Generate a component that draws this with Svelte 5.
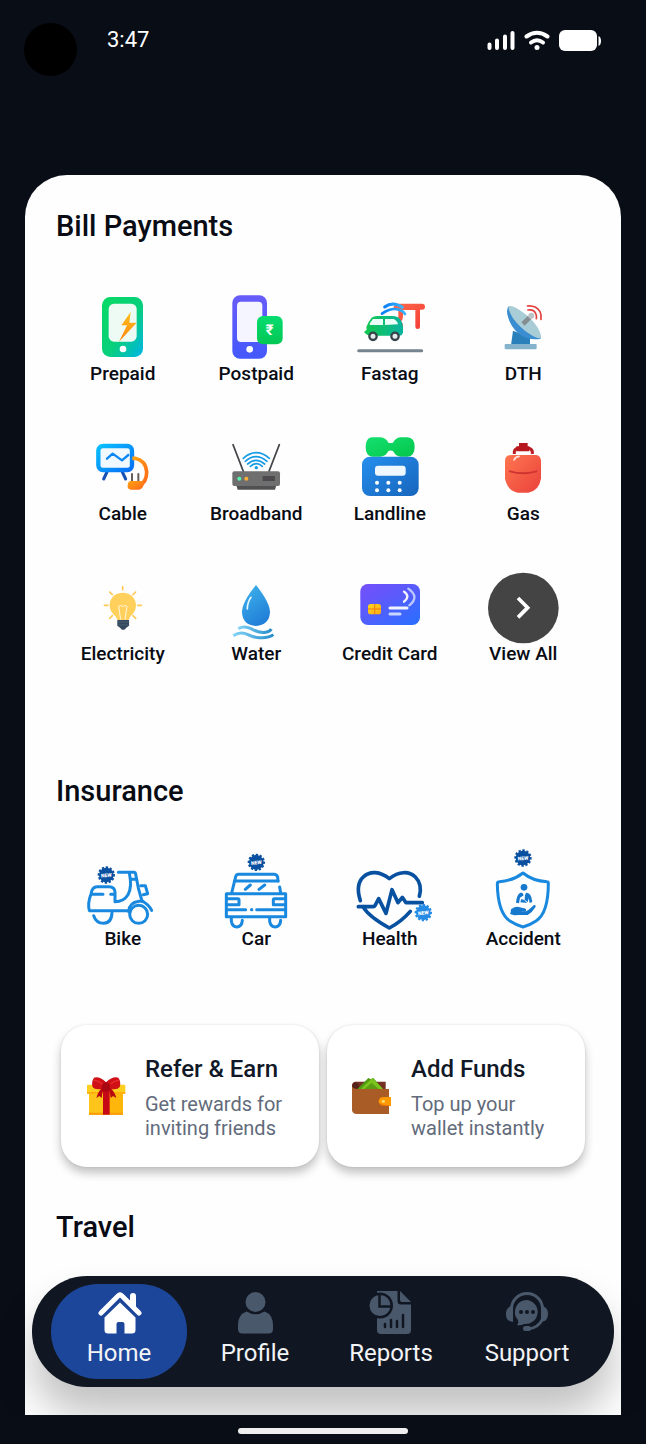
<script>
  const tabs = ['Home', 'Profile', 'Reports', 'Support'];
  let active = $state('Home');
</script>

{#snippet prepaid()}
  <svg viewBox="27 24 210 210" aria-hidden="true">
    <defs>
      <linearGradient id="pre" x1="0" y1="0" x2="1" y2="1"><stop offset=".1" stop-color="#08d868" /><stop offset=".55" stop-color="#08cf7c" /><stop offset="1" stop-color="#00b4e8" /></linearGradient>
      <linearGradient id="bolt" x1="0" y1="0" x2="0" y2="1"><stop offset="0" stop-color="#ffc01a" /><stop offset="1" stop-color="#ff8410" /></linearGradient>
    </defs>
    <rect x="69" y="36" width="123" height="180" rx="25" fill="url(#pre)" />
    <rect x="89" y="56" width="84" height="114" rx="16" fill="#eefbf5" />
    <path d="M155 81 127 121h17l-24 49 53-57h-22z" fill="url(#bolt)" />
    <circle cx="132" cy="192" r="10" fill="#fff" />
  </svg>
{/snippet}

{#snippet postpaid()}
  <svg viewBox="426 24 210 210" aria-hidden="true">
    <defs>
      <linearGradient id="post" x1="0" y1="0" x2="0" y2="1"><stop offset="0" stop-color="#685cfa" /><stop offset="1" stop-color="#4458fb" /></linearGradient>
      <linearGradient id="rup" x1="0" y1="0" x2="0" y2="1"><stop offset="0" stop-color="#06dc70" /><stop offset="1" stop-color="#03c754" /></linearGradient>
    </defs>
    <rect x="460" y="31" width="104" height="190" rx="23" fill="url(#post)" />
    <rect x="474" y="50" width="76" height="121" rx="12" fill="#f5f5ff" />
    <circle cx="512" cy="193" r="10" fill="#fff" />
    <rect x="534" y="93" width="77" height="85" rx="18" fill="url(#rup)" />
    <text x="572" y="150" text-anchor="middle" class="rupee">₹</text>
  </svg>
{/snippet}

{#snippet fastag()}
  <svg viewBox="30 24 210 210" aria-hidden="true">
    <defs>
      <linearGradient id="fcar" x1="0" y1="0" x2="1" y2="0"><stop offset="0" stop-color="#12c84c" /><stop offset="1" stop-color="#08b3a0" /></linearGradient>
      <linearGradient id="gate" x1="0" y1="0" x2="1" y2="1"><stop offset="0" stop-color="#ff6a4c" /><stop offset="1" stop-color="#f43a35" /></linearGradient>
      <linearGradient id="wave" x1="0" y1="0" x2="1" y2="0"><stop offset="0" stop-color="#087ff5" /><stop offset="1" stop-color="#38b5ff" /></linearGradient>
    </defs>
    <path d="M150 56h81q9 0 9 9t-9 9h-6v51q0 7-7 7t-7-7V75h-37v20q-1 10-6 14 8 8 6 17h-14V75l-15-7z" fill="url(#gate)" />
    <path d="M119 66q25-19 53 1" fill="none" stroke="url(#wave)" stroke-width="9" stroke-linecap="round" />
    <path d="M111 86q12-9 23-12 14-4 28 0 14 4 18 13" fill="none" stroke="url(#wave)" stroke-width="8" stroke-linecap="round" />
    <path d="M80 98q6-5 17-5h45q16 0 23 9 8 10 9 25v16q-2 8-10 9H72q-10-4-15-11l8-7-1-8q5-15 16-28z" fill="url(#fcar)" />
    <path d="M84 102h30v18H76q-4-1-1-6zM120 102h26q11 5 13 16l-39 2z" fill="#e9fff8" />
    <g fill="#e5e9ea" stroke="#35424a" stroke-width="7"><circle cx="84" cy="154" r="11" /><circle cx="150" cy="154" r="11" /></g>
    <path d="M41 197h189" stroke="#75848f" stroke-width="9" stroke-linecap="round" />
  </svg>
{/snippet}

{#snippet dth()}
  <svg viewBox="429 24 210 210" aria-hidden="true">
    <path d="m504 137 51 20v24h-57z" fill="#2a80bb" />
    <rect x="479" y="177" width="96" height="16" rx="3" fill="#85b3cb" />
    <path d="M491 64q-7 7-4 24 7 35 34 58 28 20 64 16 5-3 2-9z" fill="#398dd0" />
    <path d="M491 64q10-4 37 14 31 20 49 48 14 24 10 33-8 4-32-11-29-19-50-47-17-28-14-37z" fill="#a9cdd6" />
    <path d="m534 117 20-20" stroke="#858d91" stroke-width="14" />
    <circle cx="559" cy="92" r="9" fill="#bcc4c8" />
    <g fill="none" stroke="#e3413f" stroke-width="5" stroke-linecap="round"><path d="M549 75q17-3 23 10 4 8 2 16" /><path d="M547 63q27-2 38 17 5 10 3 23" /></g>
  </svg>
{/snippet}

{#snippet cable()}
  <svg viewBox="27 24 210 210" aria-hidden="true">
    <defs>
      <linearGradient id="tv" x1="0" y1="0" x2="1" y2="1"><stop offset="0" stop-color="#08bfff" /><stop offset="1" stop-color="#0870f5" /></linearGradient>
      <linearGradient id="plug" x1="0" y1="0" x2="1" y2="1"><stop offset="0" stop-color="#ffa313" /><stop offset="1" stop-color="#ff6818" /></linearGradient>
    </defs>
    <path d="m84 141-10 21M130 141l10 21" stroke="#154fb2" stroke-width="9" stroke-linecap="round" />
    <rect x="58" y="63" width="101" height="72" rx="14" fill="#f0f9ff" stroke="url(#tv)" stroke-width="13" />
    <path d="m84 101 17-15 28 20 19-16" fill="none" stroke="#0b86f3" stroke-width="7" stroke-linecap="round" stroke-linejoin="round" />
    <path d="M160 100h9q31 7 34 40 0 32-22 41" fill="none" stroke="url(#plug)" stroke-width="11" />
    <path d="M159 147v27M178 147v27" stroke="#655e5b" stroke-width="6" stroke-linecap="round" />
    <path d="M153 168h41q2 24-14 26h-25q-10-2-9-10 0-13 7-16z" fill="url(#plug)" />
  </svg>
{/snippet}

{#snippet broadband()}
  <svg viewBox="426 24 210 210" aria-hidden="true">
    <path d="m462 59 31 80M601 59l-31 80" stroke="#444548" stroke-width="5" stroke-linecap="round" />
    <g fill="none" stroke="#159ae6" stroke-width="5" stroke-linecap="round"><path d="M493 100q38-34 78 0" /><path d="M499 109q31-28 65 0" /><path d="M506 117q25-22 51 0" /><path d="M514 124q18-16 36 0" /></g>
    <circle cx="532" cy="128" r="5" fill="#159ae6" />
    <path d="M471 178h122l-5 16H476z" fill="#515052" />
    <rect x="460" y="139" width="143" height="44" rx="6" fill="#706f70" />
    <rect x="551" y="153" width="37" height="15" rx="2" fill="#4b494b" />
    <circle cx="481" cy="161" r="6" fill="#57f4ad" /><circle cx="502" cy="161" r="6" fill="#ffad35" />
  </svg>
{/snippet}

{#snippet landline()}
  <svg viewBox="30 24 210 210" aria-hidden="true">
    <defs>
      <linearGradient id="desk" x1="0" y1="0" x2="1" y2="1"><stop offset="0" stop-color="#258fee" /><stop offset="1" stop-color="#1765bc" /></linearGradient>
      <linearGradient id="handset" x1="0" y1="0" x2="1" y2="1"><stop offset="0" stop-color="#14e070" /><stop offset="1" stop-color="#04c64a" /></linearGradient>
    </defs>
    <path d="M81 37h25q18 2 24 16 7 2 14 0 7-14 22-16h21q22 1 22 29t-22 29h-21q-15-2-22-17-7-3-14 0-6 15-24 17H81q-19-2-19-29t19-29z" fill="url(#handset)" />
    <rect x="51" y="95" width="170" height="118" rx="24" fill="url(#desk)" />
    <rect x="90" y="122" width="92" height="30" rx="9" fill="#eff8ff" />
    <g fill="#fff"><circle cx="96" cy="173" r="6" /><circle cx="130" cy="173" r="6" /><circle cx="164" cy="173" r="6" /><circle cx="96" cy="196" r="6" /><circle cx="130" cy="196" r="6" /><circle cx="164" cy="196" r="6" /></g>
  </svg>
{/snippet}

{#snippet gas()}
  <svg viewBox="429 24 210 210" aria-hidden="true">
    <defs><linearGradient id="cyl" x1="0" y1="0" x2="1" y2="1"><stop offset="0" stop-color="#ff7650" /><stop offset="1" stop-color="#e9413a" /></linearGradient></defs>
    <path d="M508 87V80q2-10 13-10h27q12 0 14 10v7" fill="none" stroke="#bd1e24" stroke-width="9" />
    <path d="M522 54h26v10h5v15h-39V64h8z" fill="#b7181e" />
    <path d="M499 90h71q17 0 18 17v53q-5 37-38 43h-32q-32-7-38-43v-53q1-17 19-17z" fill="url(#cyl)" />
    <path d="M495 139q39 12 79 0" fill="none" stroke="#cf3432" stroke-width="6" stroke-linecap="round" />
    <path d="M507 105q4-10 15-11" fill="none" stroke="#ffe2dc" stroke-width="5" stroke-linecap="round" />
  </svg>
{/snippet}

{#snippet electricity()}
  <svg viewBox="27 24 210 210" aria-hidden="true">
    <path d="M131 65v10M92 81l8 8M170 81l-8 8M76 121h11M176 121h11M92 160l8-8M170 160l-8-8" stroke="#ffca55" stroke-width="5" stroke-linecap="round" />
    <path d="M131 83c-23 0-39 16-39 38 0 18 11 26 19 35l6 12h30l6-12c8-9 18-17 18-35 0-22-17-38-40-38z" fill="#ffd05b" />
    <path d="m125 164-6-40q7-6 12 1 6-7 13-1l-6 40" fill="none" stroke="#fff6dd" stroke-width="3" />
    <path d="M115 165h35v17l-8 6-6 6h-7l-6-6-8-6z" fill="#34495e" /><path d="M115 171h36M115 180h36" stroke="#52677b" stroke-width="2" />
  </svg>
{/snippet}

{#snippet water()}
  <svg viewBox="426 24 210 210" aria-hidden="true">
    <defs>
      <linearGradient id="drop" x1="0" y1="0" x2=".5" y2="1"><stop offset="0" stop-color="#3fb5ed" /><stop offset="1" stop-color="#2280d8" /></linearGradient>
      <linearGradient id="stream" x1="0" y1="0" x2="1" y2="0"><stop offset="0" stop-color="#82d3f6" /><stop offset="1" stop-color="#268dcb" /></linearGradient>
    </defs>
    <path d="M531 60q-42 51-42 82 2 39 42 41 40-3 42-41 0-29-42-82z" fill="url(#drop)" />
    <path d="M516 97q-11 15-11 35" fill="none" stroke="#e4f8ff" stroke-width="5" stroke-linecap="round" />
    <g fill="none" stroke="url(#stream)" stroke-width="9"><path d="M478 191q18-10 38 0 24 14 44 11 12-2 17-10" /><path d="M463 212q21-14 42-4 22 11 40 10 25 1 38-9" /></g>
  </svg>
{/snippet}

{#snippet creditCard()}
  <svg viewBox="30 24 210 210" aria-hidden="true">
    <defs>
      <linearGradient id="ccard" x1="0" y1="0" x2="1" y2="1"><stop offset="0" stop-color="#7950fb" /><stop offset="1" stop-color="#286fff" /></linearGradient>
      <linearGradient id="chip" x1="0" y1="0" x2="1" y2="1"><stop offset="0" stop-color="#ffd91d" /><stop offset="1" stop-color="#ffa915" /></linearGradient>
    </defs>
    <rect x="46" y="57" width="179" height="123" rx="23" fill="url(#ccard)" />
    <path d="M46 80q0-23 23-23h133q23 0 23 23v25H46z" fill="#6b4ff8" opacity=".25" />
    <rect x="69" y="117" width="39" height="31" rx="8" fill="url(#chip)" />
    <path d="M69 132h39M89 117v31" stroke="#f37b13" stroke-width="3" />
    <g fill="none" stroke-linecap="round"><path d="M135 129h51" stroke="#eff4ff" stroke-width="9" /><path d="M135 147h30" stroke="#c9d6ff" stroke-width="9" /><path d="M177 80q20 14 0 30" stroke="#f4f4ff" stroke-width="7" /><path d="M190 71q35 25 3 50" stroke="#bcc9ff" stroke-width="7" /></g>
  </svg>
{/snippet}

{#snippet viewAll()}
  <svg viewBox="429 24 210 210" aria-hidden="true">
    <circle cx="535" cy="129" r="106" fill="#444" />
    <path d="m519 99 29 29-29 29" fill="none" stroke="#fff" stroke-width="11" />
  </svg>
{/snippet}

{#snippet newBadge(x, y, color)}
  <g transform="translate({x} {y}) rotate(-6)">
    <circle r="22" fill={color} />
    <circle r="23" fill="none" stroke={color} stroke-width="6" stroke-dasharray="7 5.04" />
    <text y="6" text-anchor="middle" class="new">NEW</text>
  </g>
{/snippet}

{#snippet bike()}
  <svg viewBox="12 9 240 240" aria-hidden="true">
    <g class="outline">
      <path d="M118 82h47q4 0 5 6 7 44 19 80 20 10 29 28" />
      <path d="M151 84q9 43-4 65-13 21-39 21v-29q-1-16-18-16H54q-15 0-18 22-11 29-5 50h118" />
      <path d="M39 148h33M95 148h12M154 103h19M185 122h14l7 24-13 3" />
      <circle cx="179" cy="208" r="27" /><path d="M149 200q1-27 31-31h12M44 212q7 23 30 23 24-1 25-32" />
    </g>
    {@render newBadge(82, 90, '#0a50a0')}
  </svg>
{/snippet}

{#snippet car()}
  <svg viewBox="411 9 240 240" aria-hidden="true">
    <g class="outline">
      <path d="m458 144 12-49q2-7 9-7h106q8 0 11 8l1 13M466 108h132M602 126l3 18M442 146h178v69H442z" />
      <path d="M446 161h31q3 0 3 4v14h-34M617 161h-31q-3 0-3 4v14h34M447 194h53M533 194h82" />
      <path d="M457 218v11q3 17 17 17 15-2 16-20M572 218v11q3 17 17 17 15-2 16-20" />
      <path d="m499 133 15-13M540 133l17-13" />
    </g>
    <circle cx="518" cy="194" r="5" fill="#1988df" />
    {@render newBadge(532, 52, '#0a50a0')}
  </svg>
{/snippet}

{#snippet health()}
  <svg viewBox="15 9 240 240" aria-hidden="true">
    <g class="outline dark">
      <path d="M46 167c-9-28-8-56 10-72 19-18 49-16 77 6 28-22 59-24 78-5 16 16 18 36 12 58M54 185q17 30 79 64 37-20 63-50" />
      <path d="M40 185h44q6 0 8-7l9-17 22 44 18-71 18 39 13-16 11 16h49" />
    </g>
    {@render newBadge(235, 203, '#258be5')}
  </svg>
{/snippet}

{#snippet accident()}
  <svg viewBox="414 9 240 240" aria-hidden="true">
    <path class="outline" d="M534 84q29 24 72 26 4 0 4 5 0 90-37 113-16 11-39 18-21-6-38-17-38-25-39-113 0-6 6-6 42-3 71-26z" />
    <g fill="#1679ce">
      <circle cx="537" cy="127" r="10" />
      <path d="M526 143q-11 5-13 30l9 2 3-17 11-7-4-8z" />
      <path d="m543 143 7 2q7 3 9 12l3 14-8 3-3-14-3 12-9-8 1-13z" />
      <path d="m529 162 9 3 8 9-20-2z" />
      <path d="M498 193q11-10 23-7l16 4q8 1 6 7-6 5-21 1 17 6 29-4l16-14q6-1 5 5-10 17-24 25h-26l-14 1-13-4q3-6 3-14z" />
    </g>
    {@render newBadge(534, 39, '#0a50a0')}
  </svg>
{/snippet}

{#snippet tile(label, icon)}
  <a class="tile" href="#{label.toLowerCase().replace(' ', '-')}">
    {@render icon()}
    <span>{label}</span>
  </a>
{/snippet}

<div class="screen">
  <header>
    <div class="camera"></div>
    <time>3:47</time>
    <div class="status">
      <svg width="28" height="22" viewBox="0 0 28 22" aria-label="Signal"><path d="M2.5 14.5V18M10 10.5V18M18 6.5V18M25.5 3V18" stroke="#fff" stroke-width="4" stroke-linecap="round" /></svg>
      <svg width="26" height="22" viewBox="0 0 26 22" aria-label="Wi-Fi"><g fill="none" stroke="#fff" stroke-width="4" stroke-linecap="round"><path d="M2.5 6.5Q13-1 23.5 6.5" /><path d="M7 12.5Q13 8 19 12.5" /></g><circle cx="13" cy="17.5" r="2.5" fill="#fff" /></svg>
      <svg width="42" height="22" viewBox="0 0 42 22" aria-label="Battery"><rect width="38" height="21" rx="6" fill="#fff" /><path d="M39.5 6q2.500 1 2.500 5t-2.500 5z" fill="#fff" /></svg>
    </div>
  </header>

  <main>
    <section>
      <h2>Bill Payments</h2>
      <div class="grid bills">
        {@render tile('Prepaid', prepaid)}
        {@render tile('Postpaid', postpaid)}
        {@render tile('Fastag', fastag)}
        {@render tile('DTH', dth)}
        {@render tile('Cable', cable)}
        {@render tile('Broadband', broadband)}
        {@render tile('Landline', landline)}
        {@render tile('Gas', gas)}
        {@render tile('Electricity', electricity)}
        {@render tile('Water', water)}
        {@render tile('Credit Card', creditCard)}
        {@render tile('View All', viewAll)}
      </div>
    </section>

    <section class="insurance">
      <h2>Insurance</h2>
      <div class="grid">
        {@render tile('Bike', bike)}
        {@render tile('Car', car)}
        {@render tile('Health', health)}
        {@render tile('Accident', accident)}
      </div>
    </section>

    <section class="cards">
      <a class="card" href="#refer">
        <svg viewBox="138 198 120 120" aria-hidden="true">
          <path d="M147 247h102v67H147z" fill="#ffb60b" /><path d="M147 247h42v67h-42z" fill="#ffc51a" /><path d="M147 308h102v6H147z" fill="#f99d06" />
          <rect x="141" y="224" width="115" height="27" rx="3" fill="#ffcf20" /><path d="M141 246h115v5H141z" fill="#ffad08" />
          <path d="M189 237h20v77h-20z" fill="#c60915" />
          <path d="M190 236q-25 5-32-5-5-15 4-28 17-5 36 14 20-19 37-14 9 12 4 28-7 10-30 5l-10 5z" fill="#cf1017" />
          <path d="M187 233q-13 11-18 31l9-6 7 6q1-17 7-28M210 233q14 11 19 31l-10-6-7 6q-1-17-7-28" fill="#b7070f" />
          <path d="M161 210q15 2 26 12M237 210q-15 2-25 12" fill="none" stroke="#e52b2b" stroke-width="4" /><ellipse cx="198" cy="231" rx="12" ry="14" fill="#a90812" />
        </svg>
        <div><h3>Refer &amp; Earn</h3><p>Get rewards for inviting friends</p></div>
      </a>
      <a class="card" href="#funds">
        <svg viewBox="96 198 120 120" aria-hidden="true">
          <path d="M105 215h92v25H96v-16q1-8 9-9z" fill="#733023" /><path d="M96 235q0-15 9-18 12 0 12 20z" fill="#54211b" />
          <path d="m112 237 33-33 8 4 7-4 29 33z" fill="#519b13" /><path d="m123 237 34-33 32 33z" fill="#7bc61c" /><path d="m133 237 22-19 21 19z" fill="#5b9c12" />
          <path d="M96 229q3 8 12 8h99v75h-99q-11-1-12-12z" fill="#aa5c26" />
          <path d="M213 261v27h-22q-14-2-15-14 1-13 15-13z" fill="#ff9900" /><path d="M207 288h-16q-11-1-14-9 12 8 30 6z" fill="#e46f05" /><circle cx="190" cy="274" r="5" fill="#ffd66b" />
        </svg>
        <div><h3>Add Funds</h3><p>Top up your wallet instantly</p></div>
      </a>
    </section>

    <section><h2>Travel</h2></section>
  </main>

  <nav aria-label="Main">
    {#each tabs as tab}
      <button class:active={active === tab} onclick={() => (active = tab)}>
        <svg viewBox="0 0 48 44" aria-hidden="true">
          {#if tab === 'Home'}
            <path d="M36 14V5q0-2 2-2t2 2v11" stroke="currentColor" fill="currentColor" stroke-width="2" />
            <path d="m6 22 17-17q2-2 4 0l17 17" fill="none" stroke="currentColor" stroke-width="5" stroke-linecap="round" stroke-linejoin="round" />
            <path d="m25 11.500 15.500 15V39q0 3.500-3.500 3.500h-7.500V33q0-2-2-2h-4q-2 0-2 2v9.500H13q-3.500 0-3.500-3.500V26.500z" fill="currentColor" />
          {:else if tab === 'Profile'}
            <circle cx="24.500" cy="11" r="10" fill="currentColor" />
            <path d="M15.500 20.500q9 5.500 18 0 8.500 3 8.500 14V38q0 4.500-4.500 4.500h-26Q7 42.500 7 38v-3.500q0-11 8.500-14z" fill="currentColor" />
          {:else if tab === 'Reports'}
            <path d="M10 0h20.500v10q0 3.500 3.500 3.500h10V39q0 4-4 4H14q-4 0-4-4z" fill="currentColor" />
            <path d="M33 0v9q0 2 2 2h9z" fill="currentColor" />
            <circle cx="13" cy="14.500" r="13" fill="#111722" /><circle cx="13" cy="14.500" r="10.500" fill="currentColor" />
            <path d="M12.500 3v12.500H24" fill="none" stroke="#111722" stroke-width="2.500" />
            <path d="M18 33v3M24 29v7M30 30v6M36 24v12" stroke="#111722" stroke-width="2.500" stroke-linecap="round" />
          {:else}
            <path d="M8.500 18a15.500 15.500 0 0 1 31 0M39.500 28q-4 9-14.500 10" fill="none" stroke="currentColor" stroke-width="3" />
            <path d="M10 15v16q-7-.5-7-8t7-8zM38 15v16q7-.5 7-8t-7-8z" fill="currentColor" />
            <rect x="20" y="35" width="8" height="5" rx="2.500" fill="currentColor" />
            <path d="M24 9a12 12 0 1 1-3 24q-3 2-7 1 2-2 1-5A12 12 0 0 1 24 9z" fill="currentColor" />
            <g fill="#111722"><circle cx="18" cy="21" r="2" /><circle cx="24" cy="21" r="2" /><circle cx="30" cy="21" r="2" /></g>
          {/if}
        </svg>
        <span>{tab}</span>
      </button>
    {/each}
  </nav>
  <footer><i></i></footer>
</div>

<style>
  :global(body) { background: #090d16; }
  .screen {
    position: relative;
    display: flex;
    flex-direction: column;
    min-height: 100vh;
    box-sizing: border-box;
    background: #090d16;
    color: #090c14;
    font-family: Roboto, sans-serif;
  }
  h2, h3, p { margin: 0; }
  a { color: inherit; text-decoration: none; }
  header {
    display: flex;
    align-items: flex-start;
    height: 152px;
    padding: 23px 45px 0 24px;
    color: #fff;
  }
  .camera { width: 53px; height: 53px; border-radius: 50%; background: #000; }
  time { margin-left: 30px; font-size: 22px; line-height: 34px; }
  .status { display: flex; gap: 9px; margin: 7px 0 0 auto; }
  main {
    flex: 1;
    margin: 0 25px;
    padding: 31px 31px 168px;
    border-radius: 42px 42px 0 0;
    background: #fefefe;
  }
  h2 { font-size: 29px; font-weight: 500; line-height: 40px; }
  .grid { display: grid; grid-template-columns: repeat(4, 1fr); margin-top: 37px; }
  .bills { margin-top: 47px; row-gap: 48px; }
  .insurance { margin-top: 106px; }
  .tile { display: flex; flex-direction: column; align-items: center; font-size: 19px; font-weight: 500; line-height: 22px; white-space: nowrap; }
  .tile svg { width: 70px; height: 70px; overflow: visible; }
  .insurance .tile svg { width: 80px; height: 80px; }
  .outline { fill: none; stroke: #1988df; stroke-width: 9px; stroke-linecap: round; stroke-linejoin: round; }
  .dark { stroke: #0751a0; stroke-width: 11px; }
  .new { fill: #fff; font-size: 15px; font-weight: 900; }
  .rupee { fill: #fff; font-size: 44px; font-weight: 700; }
  .cards { display: grid; grid-template-columns: 1fr 1fr; gap: 8px; margin: 75px 5px 40px; }
  .card {
    display: flex;
    align-items: center;
    gap: 19px;
    min-height: 142px;
    padding: 0 25px;
    border-radius: 26px;
    background: #fff;
    box-shadow: 0 6px 10px rgb(0 0 0 / 24%), 0 0 2px rgb(0 0 0 / 12%);
    box-sizing: border-box;
  }
  .card svg { flex: none; width: 40px; height: 40px; }
  .card h3 { color: #111827; font-size: 24px; font-weight: 500; line-height: 32px; white-space: nowrap; }
  .card p { margin-top: 7px; color: #626b7b; font-size: 20px; line-height: 24px; }
  nav {
    position: absolute;
    right: 32px;
    bottom: 57px;
    left: 32px;
    display: grid;
    grid-template-columns: repeat(4, 1fr);
    padding: 8px 19px;
    border-radius: 55px;
    background: #111722;
    box-shadow: 0 28px 40px rgb(0 0 0 / 24%);
  }
  nav button {
    display: flex;
    flex-direction: column;
    align-items: center;
    padding: 7px 0 8px;
    border: 0;
    border-radius: 47px;
    background: none;
    color: #4a586c;
    font: 400 24px/36px Roboto, sans-serif;
  }
  nav svg { width: 48px; height: 44px; }
  nav span { color: #f3f4f6; }
  nav .active { background: #1c469a; color: #fff; }
  footer { position: relative; display: flex; justify-content: center; height: 16px; padding-top: 13px; background: #090d16; }
  footer i { width: 170px; height: 6px; border-radius: 3px; background: #eee; }
</style>
